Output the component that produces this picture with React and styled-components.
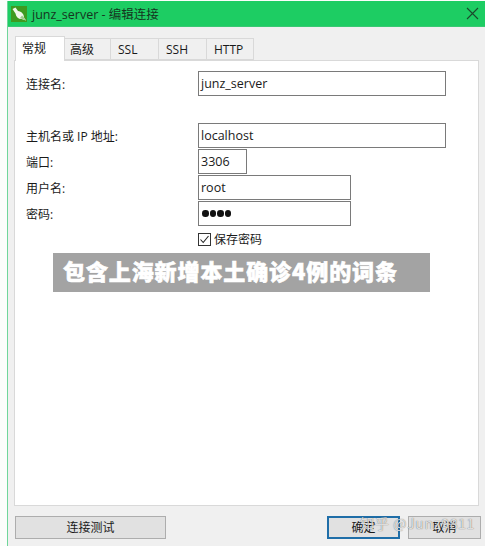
import React from "react";
import styled, { createGlobalStyle } from "styled-components";

const Global = createGlobalStyle`
  html, body { margin: 0; padding: 0; background: #fbfdfb; }
  * { box-sizing: border-box; }
`;

const ui = `"Open Sans", "Noto Sans CJK SC", sans-serif`;

const Stage = styled.div`
  position: relative;
  width: 485px;
  height: 546px;
  padding: 1px 0 0 7px;
  overflow: hidden;
  font-family: ${ui};
  font-size: 12px;
  color: #1a1a1a;
`;
const Dialog = styled.div`
  display: flex;
  flex-direction: column;
  height: 545px;
  border-left: 1px solid #6fd69a;
  background: #f0f0f0;
`;
const TitleBar = styled.div`
  display: flex;
  align-items: center;
  height: 26px;
  flex: none;
  padding: 0 6px 0 3px;
  gap: 5px;
  background: #1dcd63;
  border-bottom: 1px solid #39c873;
`;
const TitleIcon = styled.svg`
  width: 16px;
  height: 16px;
  flex: none;
`;
const TitleText = styled.div`
  flex: 1;
  font-size: 12.5px;
  color: #16351f;
  white-space: nowrap;
`;
const Body = styled.div`
  flex: 1;
  display: flex;
  flex-direction: column;
  padding: 8px 6px 0 6px;
  min-height: 0;
`;
const TabRow = styled.div`
  display: flex;
  align-items: flex-end;
  height: 25px;
  flex: none;
  margin-left: 1px;
  position: relative;
  z-index: 1;
`;
const Tab = styled.div`
  width: ${(p) => p.$w}px;
  height: ${(p) => (p.$active ? 25 : 22)}px;
  margin-bottom: ${(p) => (p.$active ? -1 : 0)}px;
  display: flex;
  align-items: center;
  padding-left: ${(p) => p.$pad}px;
  padding-bottom: ${(p) => (p.$active ? 3 : 0)}px;
  background: ${(p) => (p.$active ? "#fff" : "#f0f0f0")};
  border: 1px solid #d9d9d9;
  border-left: ${(p) => (p.$active ? "1px solid #d9d9d9" : "none")};
  border-bottom: ${(p) => (p.$active ? "none" : "1px solid #d9d9d9")};
`;
const Panel = styled.div`
  flex: 1;
  background: #fff;
  border: 1px solid #d9d9d9;
  padding: 10px 0 0 11px;
`;
const Row = styled.div`
  display: grid;
  grid-template-columns: 172px auto;
  justify-content: start;
  align-items: center;
  margin-top: ${(p) => p.$gap || 0}px;
`;
const Label = styled.div`
  font-size: 12px;
  white-space: nowrap;
`;
const Field = styled.div`
  width: ${(p) => p.$w}px;
  height: 25px;
  border: 1px solid #7a7a7a;
  background: #fff;
  padding-left: 2px;
  display: flex;
  align-items: center;
  font-size: 12.5px;
  color: #1a1a1a;
`;
const Dots = styled.div`
  display: flex;
  gap: 1px;
  margin-left: 1px;
`;
const Dot = styled.span`
  width: 6.5px;
  height: 6.5px;
  border-radius: 50%;
  background: #111;
`;
const CheckRow = styled.div`
  display: flex;
  align-items: center;
  gap: 3px;
  margin: 4px 0 0 172px;
`;
const CheckBox = styled.svg`
  width: 13px;
  height: 13px;
  flex: none;
`;
const Footer = styled.div`
  display: flex;
  align-items: center;
  height: 40px;
  flex: none;
  padding: 2px 0 0 1px;
  margin-right: -2px;
`;
const Button = styled.div`
  flex: none;
  width: ${(p) => p.$w}px;
  height: 23px;
  margin-left: ${(p) => p.$ml || 0}px;
  display: flex;
  align-items: center;
  justify-content: center;
  background: #e1e1e1;
  border: ${(p) => (p.$primary ? "2px solid #1f6ea8" : "1px solid #adadad")};
  font-size: 12px;
  color: #1a1a1a;
`;
const Banner = styled.div`
  position: absolute;
  left: 53px;
  top: 253px;
  width: 377px;
  height: 39px;
  background: #a3a3a3;
  color: #fff;
  display: flex;
  align-items: center;
  padding: 0 0 6px 10px;
  font-family: "Noto Sans CJK SC", sans-serif;
  font-weight: 900;
  font-size: 22px;
  letter-spacing: 0.9px;
  -webkit-text-stroke: 0.6px #fff;
  white-space: nowrap;
`;
const Watermark = styled.div`
  position: absolute;
  left: 360px;
  top: 513px;
  font-family: "Noto Sans CJK SC", sans-serif;
  font-size: 14px;
  letter-spacing: 0.7px;
  color: rgba(255, 255, 255, 0.8);
  text-shadow: 0 0 1px rgba(50, 50, 50, 0.85);
  white-space: nowrap;
`;

const tabs = [
  { t: "常规", w: 50, pad: 6, active: true },
  { t: "高级", w: 46, pad: 5 },
  { t: "SSL", w: 48, pad: 7 },
  { t: "SSH", w: 48, pad: 7 },
  { t: "HTTP", w: 47, pad: 7 },
];

export default function App() {
  return (
    <Stage>
      <Global />
      <Dialog>
        <TitleBar>
          <TitleIcon viewBox="0 0 16 16">
            <rect width="16" height="16" fill="#3f9a1f" />
            <path d="M1.5 3 L4.5 1.5 L7 5 C10.5 5.5 13 8 13 11.5 L15 14.5 L10.5 13 C7 13 5 11 4.5 7.5 Z" fill="#f1f7ea" />
            <path d="M9 12 L11 9.5 L13 11.5 L15 14.5 Z" fill="#9fc98c" />
          </TitleIcon>
          <TitleText>junz_server - 编辑连接</TitleText>
          <svg width="13" height="13" viewBox="0 0 13 13">
            <path d="M1 1 L12 12 M12 1 L1 12" stroke="#1b4a2c" strokeWidth="1.1" fill="none" />
          </svg>
        </TitleBar>
        <Body>
          <TabRow>
            {tabs.map((x) => (
              <Tab key={x.t} $w={x.w} $pad={x.pad} $active={x.active}>{x.t}</Tab>
            ))}
          </TabRow>
          <Panel>
            <Row>
              <Label>连接名:</Label>
              <Field $w={248}>junz_server</Field>
            </Row>
            <Row $gap={27}>
              <Label>主机名或 IP 地址:</Label>
              <Field $w={248}>localhost</Field>
            </Row>
            <Row $gap={1}>
              <Label>端口:</Label>
              <Field $w={49}>3306</Field>
            </Row>
            <Row $gap={1}>
              <Label>用户名:</Label>
              <Field $w={153}>root</Field>
            </Row>
            <Row $gap={1}>
              <Label>密码:</Label>
              <Field $w={153}>
                <Dots><Dot /><Dot /><Dot /><Dot /></Dots>
              </Field>
            </Row>
            <CheckRow>
              <CheckBox viewBox="0 0 13 13">
                <rect x="0.5" y="0.5" width="12" height="12" fill="#fff" stroke="#333" />
                <path d="M2.5 6.5 L5.2 9.5 L10.5 3" stroke="#222" strokeWidth="1.1" fill="none" />
              </CheckBox>
              <Label>保存密码</Label>
            </CheckRow>
          </Panel>
          <Footer>
            <Button $w={151}>连接测试</Button>
            <Button $w={73} $ml={161} $primary>确定</Button>
            <Button $w={73} $ml={8}>取消</Button>
          </Footer>
        </Body>
      </Dialog>
      <Banner>包含上海新增本土确诊4例的词条</Banner>
      <Watermark>知乎 @Junz9811</Watermark>
    </Stage>
  );
}
